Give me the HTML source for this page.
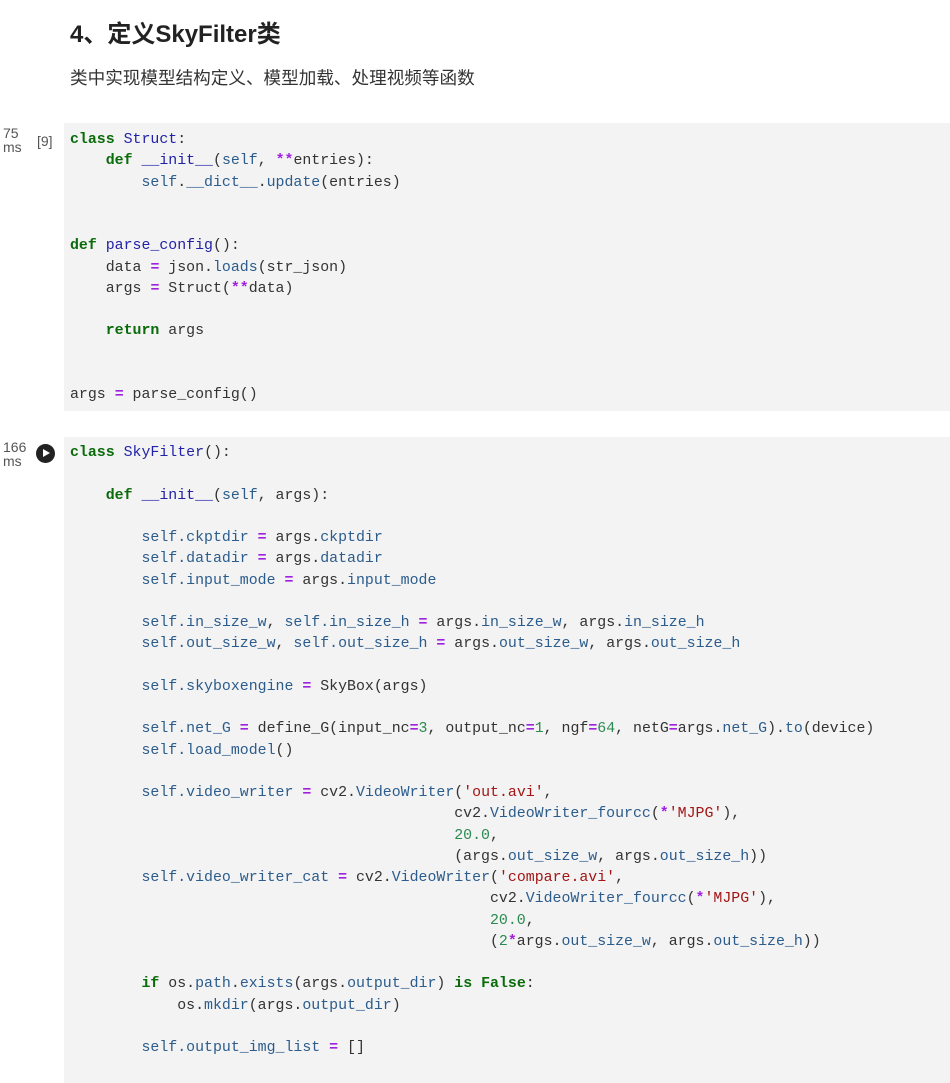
<!DOCTYPE html>
<html><head><meta charset="utf-8"><style>
body{margin:0;background:#fff;width:950px;height:1083px;overflow:hidden;position:relative;font-family:"Liberation Sans","Noto Sans CJK SC",sans-serif;color:#222}
h1{position:absolute;left:70px;top:14px;margin:0;font-size:24px;font-weight:bold;color:#222}
p{position:absolute;left:70px;top:65px;margin:0;font-size:17.6px;color:#333}
.cell{position:absolute;left:64px;width:886px;background:#f3f3f3}
pre{margin:0;position:absolute;left:6px;font-family:"Liberation Mono",monospace;font-size:14.9px;line-height:21.25px;color:#333}
.k{color:#0a6b0a;font-weight:bold}.n{color:#2b5c8c}.c{color:#2222a8}.o{color:#a020e0;font-weight:bold}.s{color:#a31515}.m{color:#2a8a50}
.t{position:absolute;left:3px;font-size:14px;line-height:14px;color:#555}
.cnt{position:absolute;left:37px;font-size:14px;color:#555}
.run{position:absolute;left:36px;top:444px;width:19px;height:19px;border-radius:50%;background:#222}
.run:after{content:"";position:absolute;left:7px;top:5px;border-left:7px solid #fff;border-top:4.5px solid transparent;border-bottom:4.5px solid transparent}
</style></head><body>
<h1>4、定义SkyFilter类</h1>
<p>类中实现模型结构定义、模型加载、处理视频等函数</p>
<div class="t" style="top:126px">75<br>ms</div>
<div class="cnt" style="top:133px">[9]</div>
<div class="cell" style="top:123px;height:288px"><pre style="top:7px"><span class="k">class</span> <span class="c">Struct</span>:
    <span class="k">def</span> <span class="c">__init__</span>(<span class="n">self</span>, <span class="o">**</span>entries):
        <span class="n">self</span>.<span class="n">__dict__</span>.<span class="n">update</span>(entries)


<span class="k">def</span> <span class="c">parse_config</span>():
    data <span class="o">=</span> json.<span class="n">loads</span>(str_json)
    args <span class="o">=</span> Struct(<span class="o">**</span>data)

    <span class="k">return</span> args


args <span class="o">=</span> parse_config()</pre></div>
<div class="t" style="top:440px">166<br>ms</div>
<div class="run"></div>
<div class="cell" style="top:437px;height:646px"><pre style="top:6px"><span class="k">class</span> <span class="c">SkyFilter</span>():

    <span class="k">def</span> <span class="c">__init__</span>(<span class="n">self</span>, args):

        <span class="n">self.ckptdir</span> <span class="o">=</span> args.<span class="n">ckptdir</span>
        <span class="n">self.datadir</span> <span class="o">=</span> args.<span class="n">datadir</span>
        <span class="n">self.input_mode</span> <span class="o">=</span> args.<span class="n">input_mode</span>

        <span class="n">self.in_size_w</span>, <span class="n">self.in_size_h</span> <span class="o">=</span> args.<span class="n">in_size_w</span>, args.<span class="n">in_size_h</span>
        <span class="n">self.out_size_w</span>, <span class="n">self.out_size_h</span> <span class="o">=</span> args.<span class="n">out_size_w</span>, args.<span class="n">out_size_h</span>

        <span class="n">self.skyboxengine</span> <span class="o">=</span> SkyBox(args)

        <span class="n">self.net_G</span> <span class="o">=</span> define_G(input_nc<span class="o">=</span><span class="m">3</span>, output_nc<span class="o">=</span><span class="m">1</span>, ngf<span class="o">=</span><span class="m">64</span>, netG<span class="o">=</span>args.<span class="n">net_G</span>).<span class="n">to</span>(device)
        <span class="n">self.load_model</span>()

        <span class="n">self.video_writer</span> <span class="o">=</span> cv2.<span class="n">VideoWriter</span>(<span class="s">'out.avi'</span>,
                                           cv2.<span class="n">VideoWriter_fourcc</span>(<span class="o">*</span><span class="s">'MJPG'</span>),
                                           <span class="m">20.0</span>,
                                           (args.<span class="n">out_size_w</span>, args.<span class="n">out_size_h</span>))
        <span class="n">self.video_writer_cat</span> <span class="o">=</span> cv2.<span class="n">VideoWriter</span>(<span class="s">'compare.avi'</span>,
                                               cv2.<span class="n">VideoWriter_fourcc</span>(<span class="o">*</span><span class="s">'MJPG'</span>),
                                               <span class="m">20.0</span>,
                                               (<span class="m">2</span><span class="o">*</span>args.<span class="n">out_size_w</span>, args.<span class="n">out_size_h</span>))

        <span class="k">if</span> os.<span class="n">path</span>.<span class="n">exists</span>(args.<span class="n">output_dir</span>) <span class="k">is</span> <span class="k">False</span>:
            os.<span class="n">mkdir</span>(args.<span class="n">output_dir</span>)

        <span class="n">self.output_img_list</span> <span class="o">=</span> []</pre></div>
</body></html>
